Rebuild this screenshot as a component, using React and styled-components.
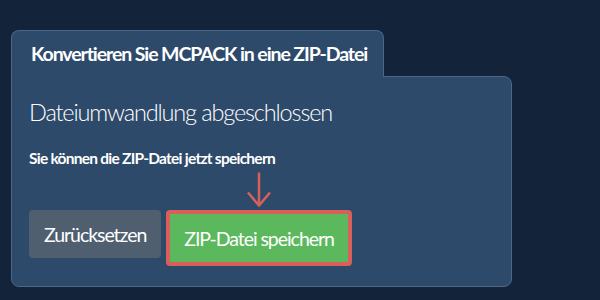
import React from "react";
import styled, { createGlobalStyle } from "styled-components";

const Global = createGlobalStyle`
  html, body { margin: 0; padding: 0; background: #12233a; }
  body { font-family: Lato, "Open Sans", sans-serif; color: #fff; }
`;

const Page = styled.div`
  width: 600px;
  height: 300px;
  box-sizing: border-box;
  padding: 30px 88px 0 11px;
`;

const Tab = styled.div`
  position: relative;
  z-index: 1;
  width: 373px;
  height: 47px;
  box-sizing: border-box;
  margin-bottom: -1px;
  padding: 11px 0 0 19px;
  background: #2d4a6a;
  border: 1px solid #4b6888;
  border-bottom: none;
  border-radius: 8px 8px 0 0;
  font-size: 19.5px;
  line-height: 24px;
  font-weight: 700;
  letter-spacing: -1.1px;
  white-space: nowrap;
`;

const Panel = styled.div`
  height: 211px;
  box-sizing: border-box;
  padding: 20px 17px 0 17px;
  background: #2d4a6a;
  border: 1px solid #4b6888;
  border-radius: 0 8px 8px 8px;
`;

const Heading = styled.h2`
  margin: 0;
  font-size: 23.5px;
  font-weight: 300;
  line-height: 30px;
  letter-spacing: -1.15px;
  white-space: nowrap;
`;

const Note = styled.p`
  margin: 21px 0 0;
  font-size: 15.5px;
  font-weight: 700;
  line-height: 20px;
  letter-spacing: -0.75px;
  white-space: nowrap;
`;

const Actions = styled.div`
  display: flex;
  align-items: flex-start;
  gap: 5px;
  margin-top: 42px;
`;

const Button = styled.button`
  position: relative;
  box-sizing: border-box;
  height: ${(p) => (p.$highlight ? "56px" : "48px")};
  padding: 0 ${(p) => (p.$highlight ? "14px" : "15px")};
  border: ${(p) => (p.$highlight ? "4px solid #d9605a" : "none")};
  border-radius: 4px;
  background: ${(p) => (p.$highlight ? "#5cb85c" : "#4f5f70")};
  color: #fff;
  font-family: Lato, sans-serif;
  font-size: 19.5px;
  font-weight: 400;
  letter-spacing: -1.05px;
  white-space: nowrap;
  cursor: pointer;
`;

const Arrow = styled.svg`
  position: absolute;
  left: 50%;
  bottom: calc(100% + 7px);
  transform: translateX(-50%);
`;

export default function App() {
  return (
    <>
      <Global />
      <Page>
        <Tab>Konvertieren Sie MCPACK in eine ZIP-Datei</Tab>
        <Panel>
          <Heading>Dateiumwandlung abgeschlossen</Heading>
          <Note>Sie können die ZIP-Datei jetzt speichern</Note>
          <Actions>
            <Button>Zurücksetzen</Button>
            <Button $highlight>
              <Arrow width="26" height="35" viewBox="0 0 26 35" fill="none">
                <path d="M13 0.5 V33.5 M2 20.5 L13 33.5 L24 20.5" stroke="#d9605a" strokeWidth="2.5" />
              </Arrow>
              ZIP-Datei speichern
            </Button>
          </Actions>
        </Panel>
      </Page>
    </>
  );
}
